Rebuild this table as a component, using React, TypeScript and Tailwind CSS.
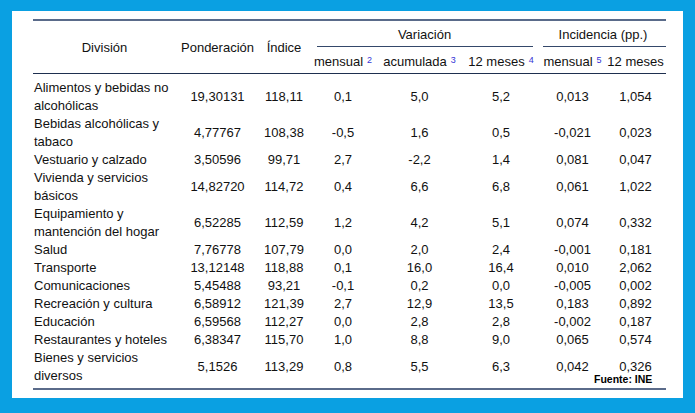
import React from 'react'

const rows: { name: string[]; v: string[] }[] = [
    { name: ['Alimentos y bebidas no', 'alcohólicas'], v: ['19,30131', '118,11', '0,1', '5,0', '5,2', '0,013', '1,054'] },
    { name: ['Bebidas alcohólicas y', 'tabaco'], v: ['4,77767', '108,38', '-0,5', '1,6', '0,5', '-0,021', '0,023'] },
    { name: ['Vestuario y calzado'], v: ['3,50596', '99,71', '2,7', '-2,2', '1,4', '0,081', '0,047'] },
    { name: ['Vivienda y servicios', 'básicos'], v: ['14,82720', '114,72', '0,4', '6,6', '6,8', '0,061', '1,022'] },
    { name: ['Equipamiento y', 'mantención del hogar'], v: ['6,52285', '112,59', '1,2', '4,2', '5,1', '0,074', '0,332'] },
    { name: ['Salud'], v: ['7,76778', '107,79', '0,0', '2,0', '2,4', '-0,001', '0,181'] },
    { name: ['Transporte'], v: ['13,12148', '118,88', '0,1', '16,0', '16,4', '0,010', '2,062'] },
    { name: ['Comunicaciones'], v: ['5,45488', '93,21', '-0,1', '0,2', '0,0', '-0,005', '0,002'] },
    { name: ['Recreación y cultura'], v: ['6,58912', '121,39', '2,7', '12,9', '13,5', '0,183', '0,892'] },
    { name: ['Educación'], v: ['6,59568', '112,27', '0,0', '2,8', '2,8', '-0,002', '0,187'] },
    { name: ['Restaurantes y hoteles'], v: ['6,38347', '115,70', '1,0', '8,8', '9,0', '0,065', '0,574'] },
    { name: ['Bienes y servicios', 'diversos'], v: ['5,1526', '113,29', '0,8', '5,5', '6,3', '0,042', '0,326'] },
]

const cols = 'grid grid-cols-[143px_83px_50px_68px_85px_78px_65px_61px]'

function Sup({ n }: { n: string }) {
    return <sup className="text-[9px] text-[#3434d6] ml-[4px] relative -top-[2px]">{n}</sup>
}

export default function App() {
    return (
        <div className="w-[695px] h-[413px] bg-[#0aa0e2] pt-[11px] pl-[12px] pr-[12px] font-['Liberation_Sans',Arial,sans-serif] text-[13px] text-[#111]">
            <div className="relative bg-white h-[387px] pl-[21px] pt-[8px]">
                <div className="w-[633px]">
                    {/* Top rule */}
                    <div className="h-[2px] bg-[#5a6b8a]" />

                    {/* Header */}
                    <div className={`${cols} grid-rows-[26px_26px]`}>
                        <div className="row-span-2 flex items-center justify-center pt-[2px]">División</div>
                        <div className="row-span-2 flex items-center justify-center pt-[2px]">Ponderación</div>
                        <div className="row-span-2 flex items-center justify-center pt-[2px]">Índice</div>
                        <div className="col-span-3 flex flex-col">
                            <div className="flex-1 flex items-center justify-center pt-[3px]">Variación</div>
                            <div className="h-px bg-[#34486a] ml-[8px] mr-[7px]" />
                        </div>
                        <div className="col-span-2 flex flex-col">
                            <div className="flex-1 flex items-center justify-center pt-[3px]">Incidencia (pp.)</div>
                            <div className="h-px bg-[#34486a] ml-[3px]" />
                        </div>
                        <div className="flex items-center justify-center pt-[4px]">mensual<Sup n="2" /></div>
                        <div className="flex items-center justify-center pt-[4px]">acumulada<Sup n="3" /></div>
                        <div className="flex items-center justify-center pt-[4px]">12 meses<Sup n="4" /></div>
                        <div className="flex items-center justify-center pt-[4px]">mensual<Sup n="5" /></div>
                        <div className="flex items-center justify-center pt-[4px]">12 meses</div>
                    </div>
                    <div className="h-px bg-[#1e2f4f]" />

                    {/* Body */}
                    <div className="pt-[5px] pb-[3px] leading-[18px]">
                        {rows.map((r) => (
                            <div key={r.name[0]} className={`${cols} items-center`}>
                                <div className="pl-px">
                                    {r.name.map((l) => (
                                        <div key={l}>{l}</div>
                                    ))}
                                </div>
                                {r.v.map((v, i) => (
                                    <div key={i} className="text-center">{v}</div>
                                ))}
                            </div>
                        ))}
                    </div>

                    {/* Bottom rule */}
                    <div className="h-[2px] bg-[#5a6b8a]" />
                </div>

                <div className="absolute left-[582px] top-[363px] text-[10.5px] font-bold leading-none text-black">Fuente: INE</div>
            </div>
        </div>
    )
}
